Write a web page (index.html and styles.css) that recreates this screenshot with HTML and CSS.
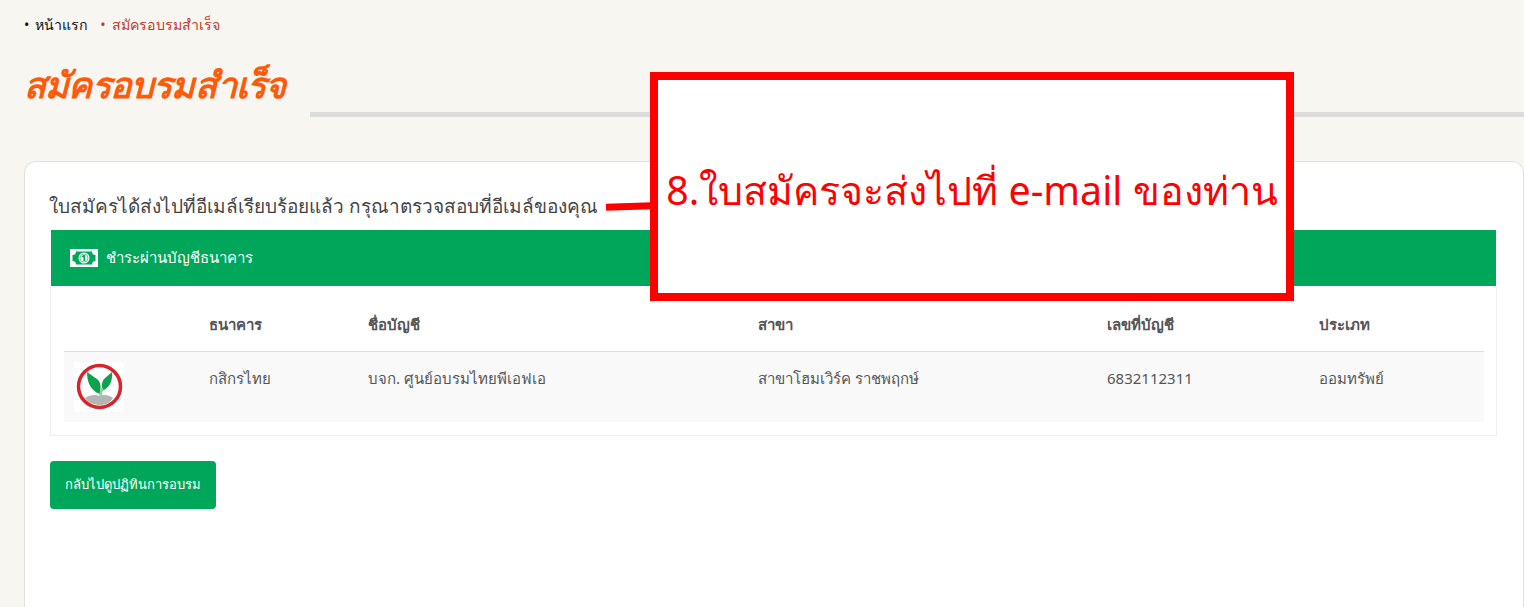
FILE: index.html
```html
<!DOCTYPE html>
<html lang="th">
<head>
  <meta charset="UTF-8">
  <meta name="viewport" content="width=device-width, initial-scale=1.0">
  <title>สมัครอบรมสำเร็จ</title>
  <link rel="stylesheet" href="styles.css">
</head>
<body>
  <!-- Breadcrumb -->
  <ul class="breadcrumb">
    <li>หน้าแรก</li>
    <li class="current">สมัครอบรมสำเร็จ</li>
  </ul>

  <!-- Page title -->
  <div class="page-title">
    <h1>สมัครอบรมสำเร็จ</h1>
    <div class="title-rule"></div>
  </div>

  <!-- Card -->
  <div class="card">
    <p class="message">ใบสมัครได้ส่งไปที่อีเมล์เรียบร้อยแล้ว กรุณาตรวจสอบที่อีเมล์ของคุณ</p>

    <div class="pay-header">
      <svg class="money-icon" width="28" height="18" viewBox="0 0 28 18">
        <path fill="#fff" fill-rule="evenodd" d="M0 0h28v18H0zM6 2.500a3.500 3.500 0 0 1-3.500 3.500v6A3.500 3.500 0 0 1 6 15.500h16a3.500 3.500 0 0 1 3.500-3.500V6A3.500 3.500 0 0 1 22 2.500z"/>
        <circle cx="14" cy="9" r="5.500" fill="#fff"/>
        <circle cx="14" cy="9" r="4" fill="none" stroke="#00a75a" stroke-width=".6"/>
        <path fill="#00a75a" d="M13.400 6h1.800v6h-1.800zM12 7l1.400-1v1.700l-1.400.6z"/>
      </svg>
      <span>ชำระผ่านบัญชีธนาคาร</span>
    </div>

    <div class="table-box">
      <table class="bank-table">
        <thead>
          <tr>
            <th class="col-logo"></th>
            <th class="col-bank">ธนาคาร</th>
            <th class="col-name">ชื่อบัญชี</th>
            <th class="col-branch">สาขา</th>
            <th class="col-number">เลขที่บัญชี</th>
            <th>ประเภท</th>
          </tr>
        </thead>
        <tbody>
          <tr>
            <td>
              <svg class="bank-logo" width="50" height="50" viewBox="0 0 50 50">
                <rect width="50" height="50" fill="#fff"/>
                <path fill="#b4b4b4" d="M11 36c4-3 10-4 14-2 5-2 10-1 14 2-3 5-8 7-13 7s-12-2-15-7z"/>
                <circle cx="25.500" cy="24.500" r="21" fill="none" stroke="#d8232a" stroke-width="3.500"/>
                <path fill="#0fa24e" d="M13 10l10 7c4 3 4 8 3 15C17 29 13 21 13 10z"/>
                <path fill="#0fa24e" d="M38 10c1 10-3 16-10 19 0-4-1-8 2-12z"/>
                <path fill="#8ed0a4" d="M25 36c0-4 1-8 3-11l1.500 2c-1.500 3-1.500 5-1.500 9z"/>
              </svg>
            </td>
            <td>กสิกรไทย</td>
            <td>บจก. ศูนย์อบรมไทยพีเอฟเอ</td>
            <td>สาขาโฮมเวิร์ค ราชพฤกษ์</td>
            <td>6832112311</td>
            <td>ออมทรัพย์</td>
          </tr>
        </tbody>
      </table>
    </div>

    <a href="#" class="back-button">กลับไปดูปฏิทินการอบรม</a>
  </div>

  <!-- Annotation over the page -->
  <div class="callout-line"></div>
  <div class="callout">8.ใบสมัครจะส่งไปที่ e-mail ของท่าน</div>
</body>
</html>
```

FILE: styles.css
```css
/* Global Styles */
html, body {
  height: 607px;
  overflow: hidden;
}

body {
  margin: 0;
  position: relative;
  background-color: #f8f6f1;
  color: #444;
  font-family: 'Noto Sans', 'Liberation Sans', sans-serif;
}

/* Breadcrumb */
.breadcrumb {
  list-style: none;
  display: flex;
  gap: 12px;
  margin: 0;
  padding: 15px 0 0 24px;
  font-size: 14.200px;
  line-height: 20px;
  color: #111;
}

.breadcrumb li::before {
  content: "•";
  margin-right: 6px;
}

.breadcrumb .current {
  color: #c0392b;
}

/* Page title */
.page-title {
  display: flex;
  align-items: flex-end;
  height: 82px;
}

.page-title h1 {
  width: 286px;
  margin: 0;
  padding-left: 24px;
  padding-bottom: 7px;
  font-size: 36px;
  line-height: 50px;
  font-weight: 700;
  font-style: italic;
  letter-spacing: -0.8px;
  color: #ff5a0a;
  white-space: nowrap;
}

.title-rule {
  flex: 1;
  height: 5px;
  background-color: #dddcdc;
}

/* Card */
.card {
  box-sizing: border-box;
  height: 446px;
  margin: 44px 0 0 24px;
  padding: 30px 26px 0 25px;
  background-color: #fff;
  border: 1px solid #e2e0da;
  border-bottom: none;
  border-radius: 12px 12px 0 0;
}

.message {
  margin: 0 0 0 -1px;
  height: 38px;
  font-size: 19px;
  line-height: 29px;
  color: #444;
  white-space: nowrap;
}

.pay-header {
  display: flex;
  align-items: center;
  gap: 8px;
  height: 56px;
  margin: 0 1px;
  padding-left: 19px;
  background-color: #00a75a;
  color: #fff;
  font-size: 15px;
  font-weight: 500;
}

/* Table */
.table-box {
  padding: 13px 12px 13px 13px;
  background-color: #fff;
  border: 1px solid #eeeeee;
  border-top: none;
}

.bank-table {
  width: 100%;
  border-collapse: collapse;
  font-size: 15px;
  color: #555;
}

.bank-table th {
  height: 52px;
  padding: 0;
  text-align: left;
  font-weight: 700;
  border-bottom: 1px solid #dddddd;
}

.bank-table td {
  height: 70px;
  padding: 16px 0 0;
  vertical-align: top;
  box-sizing: border-box;
  line-height: 20px;
  background-color: #f9f9f9;
}

.bank-table td:first-child {
  padding: 10px 0 0 10px;
}

.bank-logo {
  display: block;
}

.col-logo { width: 145px; }
.col-bank { width: 159px; }
.col-name { width: 390px; }
.col-branch { width: 349px; }
.col-number { width: 212px; }

/* Back button */
.back-button {
  display: inline-flex;
  align-items: center;
  justify-content: center;
  width: 166px;
  height: 48px;
  margin-top: 25px;
  background-color: #00a75a;
  color: #fff;
  border-radius: 4px;
  font-size: 13px;
  font-weight: 500;
  text-decoration: none;
}

/* Annotation */
.callout {
  position: absolute;
  left: 650px;
  top: 72px;
  box-sizing: border-box;
  width: 644px;
  height: 229px;
  padding-top: 9px;
  display: flex;
  align-items: center;
  justify-content: center;
  background-color: #fff;
  border: 8px solid #ff0000;
  color: #ff0000;
  font-size: 39.300px;
  white-space: nowrap;
}

.callout-line {
  position: absolute;
  left: 606px;
  top: 203px;
  width: 46px;
  height: 7px;
  background-color: #ff0000;
  transform: rotate(-2deg);
}
```
